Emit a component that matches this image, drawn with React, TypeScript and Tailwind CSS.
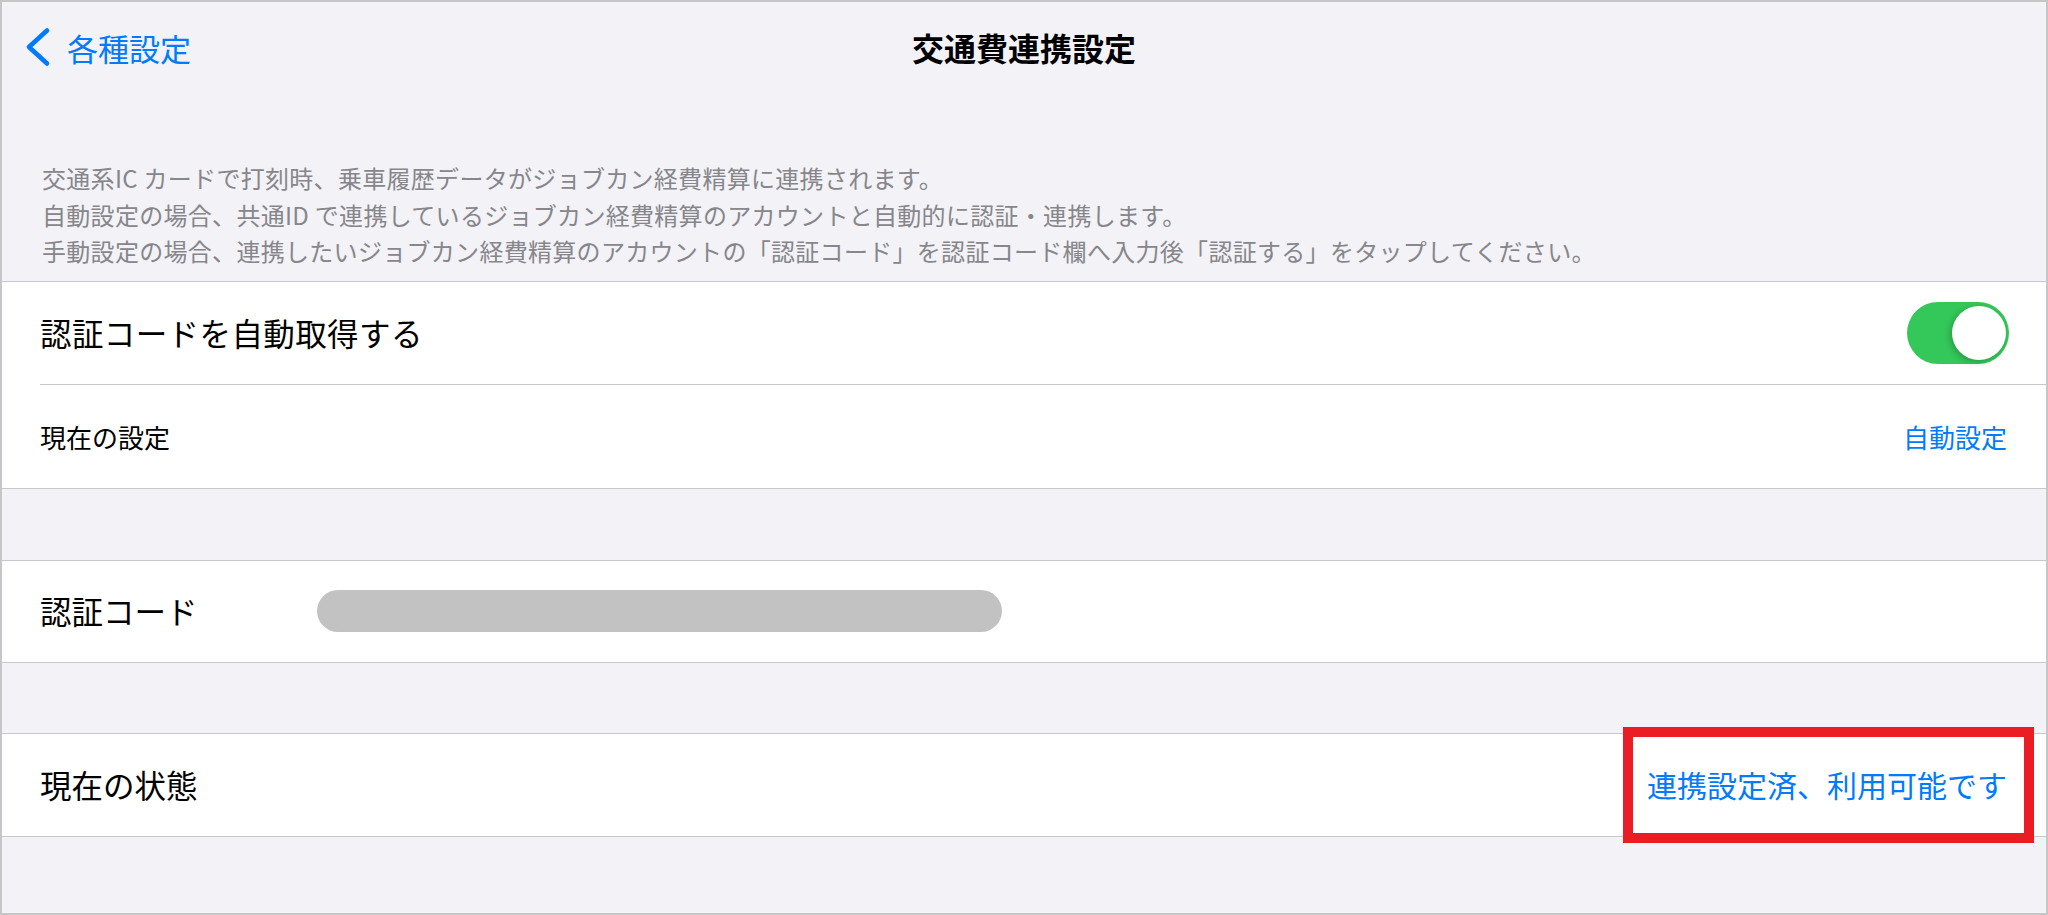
import React from "react";

const font = { fontFamily: '"Noto Sans CJK JP", "Noto Sans", sans-serif' };

export default function App() {
  return (
    <div
      className="w-[2048px] h-[915px] box-border border-2 border-[#c6c6c8] bg-[#f2f2f7] overflow-hidden flex flex-col"
      style={font}
    >
      {/* header */}
      <div className="h-[90px] grid grid-cols-[1fr_auto_1fr] items-center shrink-0">
        <div className="flex items-center pl-[23px]">
          <svg width="28" height="40" viewBox="0 0 28 40" className="shrink-0">
            <polyline
              points="22,3.5 4,20 22,36.5"
              fill="none"
              stroke="#007aff"
              strokeWidth="4.6"
              strokeLinecap="round"
              strokeLinejoin="round"
            />
          </svg>
          <span className="ml-[14px] text-[31px] leading-none text-[#007aff]">各種設定</span>
        </div>
        <div className="text-[32px] font-bold leading-none text-black">交通費連携設定</div>
        <div />
      </div>

      {/* description */}
      <div className="pl-[40px] pt-[68px] pb-[11px] text-[24px] leading-[36.5px] tracking-[0.3px] text-[#86868b] shrink-0">
        <p>交通系IC カードで打刻時、乗車履歴データがジョブカン経費精算に連携されます。</p>
        <p>自動設定の場合、共通ID で連携しているジョブカン経費精算のアカウントと自動的に認証・連携します。</p>
        <p>手動設定の場合、連携したいジョブカン経費精算のアカウントの「認証コード」を認証コード欄へ入力後「認証する」をタップしてください。</p>
      </div>

      {/* section 1 */}
      <div className="bg-white border-y border-[#c8c7cc] shrink-0">
        <div className="pl-[38px]">
          <div className="h-[103px] flex items-center justify-between pr-[37px] border-b border-[#c8c7cc]">
            <span className="text-[31.5px] tracking-[0.4px] text-black">認証コードを自動取得する</span>
            <div className="relative w-[102px] h-[62px] rounded-full bg-[#34c759]">
              <div className="absolute right-[3px] top-[4px] w-[54px] h-[54px] rounded-full bg-white shadow-[-2px_2px_6px_rgba(0,0,0,0.22)]" />
            </div>
          </div>
        </div>
        <div className="pl-[38px]">
          <div className="h-[103px] flex items-center justify-between pr-[39px]">
            <span className="text-[26px] text-black">現在の設定</span>
            <span className="text-[26px] text-[#007aff]">自動設定</span>
          </div>
        </div>
      </div>

      {/* section 2 */}
      <div className="mt-[71px] bg-white border-y border-[#c8c7cc] shrink-0">
        <div className="pl-[38px] h-[101px] flex items-center">
          <span className="w-[277px] shrink-0 text-[31.5px] text-black">認証コード</span>
          <div className="w-[685px] h-[42px] rounded-full bg-[#c2c2c2]" />
        </div>
      </div>

      {/* section 3 */}
      <div className="relative mt-[70px] bg-white border-y border-[#c8c7cc] shrink-0">
        <div className="pl-[38px] pr-[39px] h-[102px] flex items-center justify-between">
          <span className="text-[31.5px] text-black">現在の状態</span>
          <span className="text-[30px] text-[#007aff]">連携設定済、利用可能です</span>
        </div>
        <div className="absolute right-[12px] top-[-7px] w-[411px] h-[116px] border-[10px] border-[#ec1c24] pointer-events-none" />
      </div>
    </div>
  );
}
